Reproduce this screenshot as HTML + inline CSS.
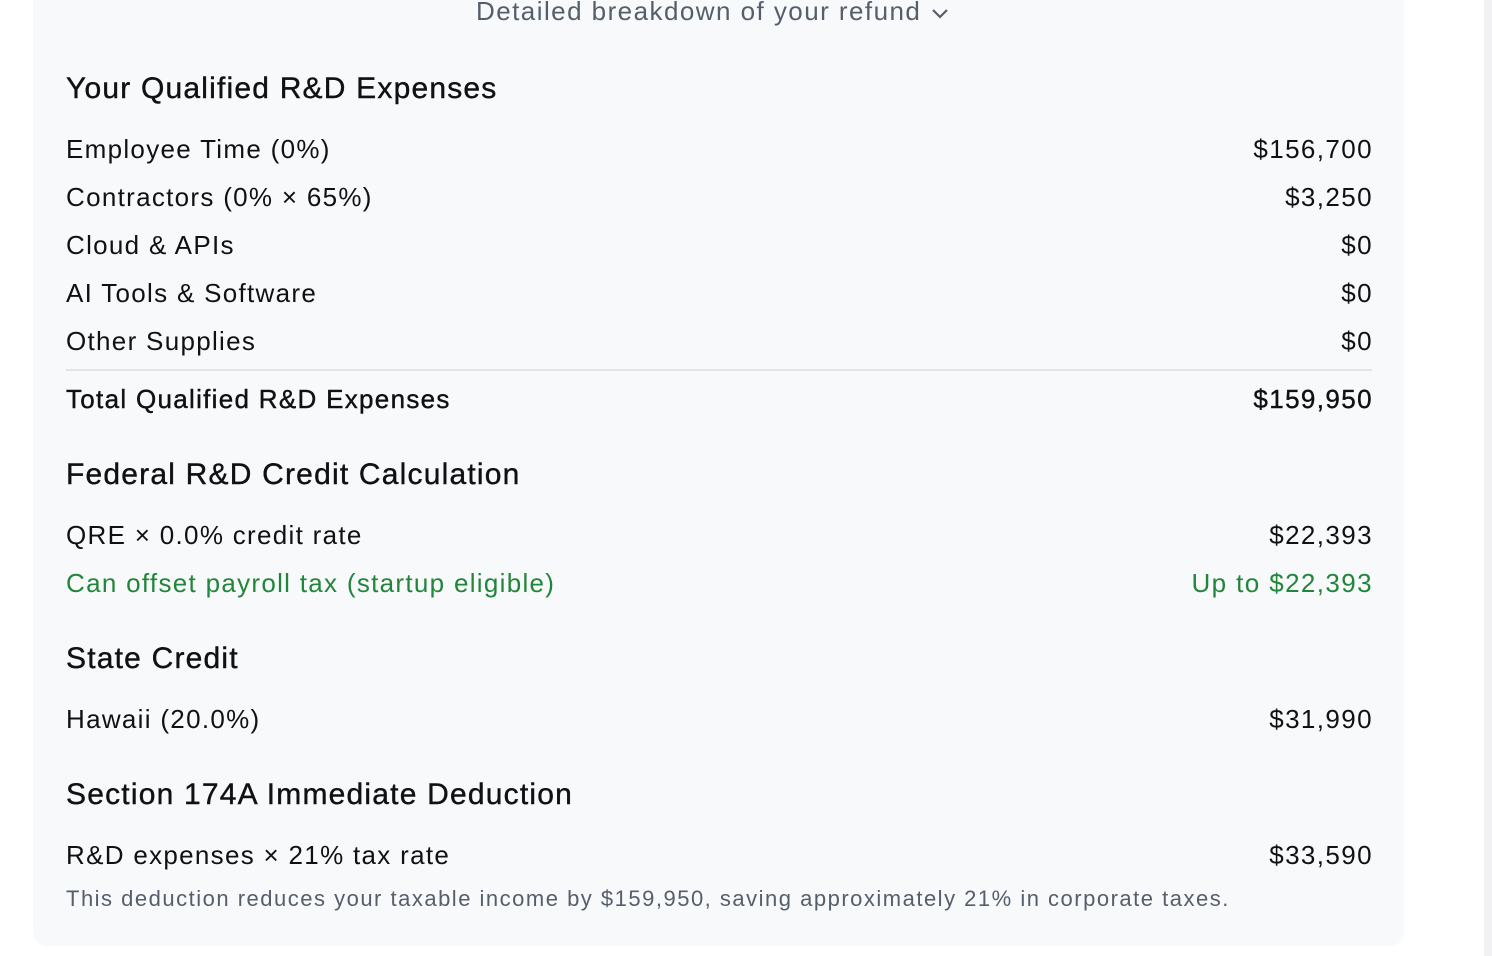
<!DOCTYPE html>
<html><head><style>
body{margin:0;width:1492px;height:956px;background:#fff;font-family:"Liberation Sans",sans-serif;position:relative;overflow:hidden;color:#111}
.card{position:absolute;left:33px;top:-20px;width:1371px;height:966px;background:#f8f9fb;border-radius:14px}
.sb{position:absolute;left:1484px;top:0;width:8px;height:956px;background:#f1f1f3}
.t{position:absolute;white-space:nowrap}
.h{left:66px;font-size:30px;letter-spacing:1.2px;-webkit-text-stroke:0.4px #111}
.l{left:66px;font-size:26px;letter-spacing:1.3px}
.r{right:119px;font-size:26px;text-align:right;letter-spacing:1.4px}
.b{-webkit-text-stroke:0.4px #111}
.g{color:#22863a}
</style></head><body>
<div class="card"></div><div class="sb"></div>
<div class="t" style="left:476px;top:-4px;font-size:26px;color:#555e6b;letter-spacing:1.45px">Detailed breakdown of your refund <svg width="20" height="14" viewBox="0 0 20 14"><path d="M3 4l7 7 7-7" fill="none" stroke="#555e6b" stroke-width="2.2"/></svg></div>
<div class="t h" style="top:72px">Your Qualified R&amp;D Expenses</div>
<div class="t l" style="top:134px">Employee Time (0%)</div><div class="t r" style="top:134px">$156,700</div>
<div class="t l" style="top:182px">Contractors (0% × 65%)</div><div class="t r" style="top:182px">$3,250</div>
<div class="t l" style="top:230px">Cloud &amp; APIs</div><div class="t r" style="top:230px">$0</div>
<div class="t l" style="top:278px">AI Tools &amp; Software</div><div class="t r" style="top:278px">$0</div>
<div class="t l" style="top:326px">Other Supplies</div><div class="t r" style="top:326px">$0</div>
<div style="position:absolute;left:66px;top:369px;width:1306px;height:2px;background:#e6e2e8"></div>
<div class="t l b" style="top:384px">Total Qualified R&amp;D Expenses</div><div class="t r b" style="top:384px">$159,950</div>
<div class="t h" style="top:458px">Federal R&amp;D Credit Calculation</div>
<div class="t l" style="top:520px">QRE × 0.0% credit rate</div><div class="t r" style="top:520px">$22,393</div>
<div class="t l g" style="top:568px">Can offset payroll tax (startup eligible)</div><div class="t r g" style="top:568px">Up to $22,393</div>
<div class="t h" style="top:642px">State Credit</div>
<div class="t l" style="top:704px">Hawaii (20.0%)</div><div class="t r" style="top:704px">$31,990</div>
<div class="t h" style="top:778px">Section 174A Immediate Deduction</div>
<div class="t l" style="top:840px">R&amp;D expenses × 21% tax rate</div><div class="t r" style="top:840px">$33,590</div>
<div class="t" style="left:66px;top:886px;font-size:22px;color:#555e6b;letter-spacing:1.5px">This deduction reduces your taxable income by $159,950, saving approximately 21% in corporate taxes.</div>
</body></html>
